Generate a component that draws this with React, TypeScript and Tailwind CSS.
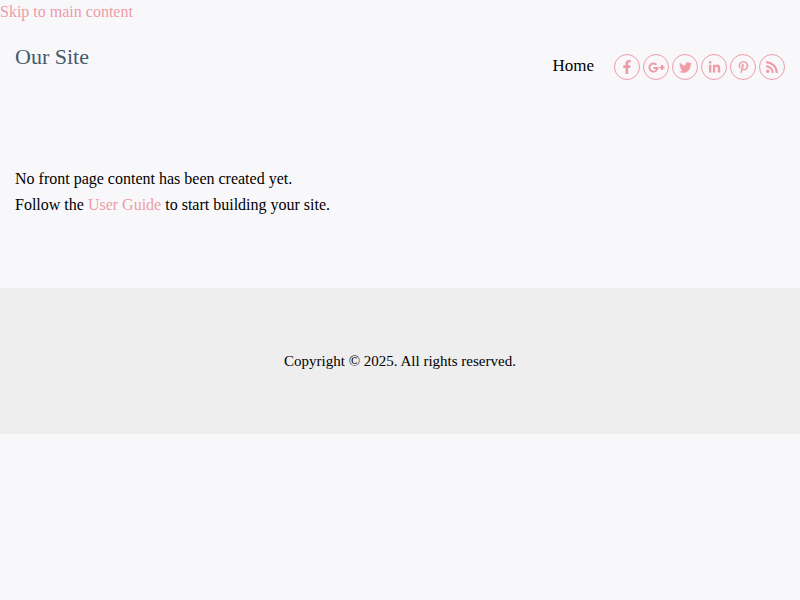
import React from "react";
import {
  FaFacebookF,
  FaTwitter,
  FaLinkedinIn,
  FaPinterestP,
} from "react-icons/fa";

type IconProps = { size: number; "aria-hidden"?: "true" };

function GooglePlusIcon({ size, ...rest }: IconProps) {
  return (
    <svg
      width={size}
      height={size}
      viewBox="0 0 17 17"
      fill="none"
      stroke="currentColor"
      strokeWidth="2"
      {...rest}
    >
      <path d="M8.4 5.6A4.1 4.1 0 1 0 9.6 9H5.4" />
      <path d="M11.6 8.5h5M14.1 6v5" />
    </svg>
  );
}

function RssIcon({ size, ...rest }: IconProps) {
  return (
    <svg
      width={size}
      height={size}
      viewBox="0 0 12 12"
      fill="none"
      stroke="currentColor"
      strokeWidth="2.1"
      {...rest}
    >
      <circle cx="1.8" cy="10.2" r="1.7" fill="currentColor" stroke="none" />
      <path d="M0 5.2A6.8 6.8 0 0 1 6.8 12M0 1.2A10.8 10.8 0 0 1 10.8 12" />
    </svg>
  );
}

const socials = [
  { label: "Facebook", Icon: FaFacebookF, size: 14 },
  { label: "Google Plus", Icon: GooglePlusIcon, size: 17 },
  { label: "Twitter", Icon: FaTwitter, size: 13 },
  { label: "LinkedIn", Icon: FaLinkedinIn, size: 13 },
  { label: "Pinterest", Icon: FaPinterestP, size: 13 },
  { label: "RSS", Icon: RssIcon, size: 12 },
];

export default function App() {
  return (
    <div className="min-h-screen bg-[#f8f8fb] font-['Liberation_Serif',serif] text-base leading-[26px] text-black">
      <a href="#main-content" className="block leading-6 text-[#ee9ca7]">
        Skip to main content
      </a>
      <header className="flex items-start justify-between px-[15px] pt-4">
        <h1 className="text-[22px] leading-[34px] text-[#455a6b]">
          <a href="#home">Our Site</a>
        </h1>
        <div className="flex items-end gap-5 pt-3">
          <nav aria-label="Main">
            <a href="#home" className="block text-[17px] leading-7">
              Home
            </a>
          </nav>
          <ul className="flex gap-[3px] pt-[2px]">
            {socials.map(({ label, Icon, size }) => (
              <li key={label}>
                <a
                  href="#social"
                  aria-label={label}
                  className="flex size-[26px] items-center justify-center rounded-full border border-[#ee9ca7] text-[#ee9ca7]"
                >
                  <Icon size={size} aria-hidden="true" />
                </a>
              </li>
            ))}
          </ul>
        </div>
      </header>
      <main id="main-content" className="px-[15px] pt-[86px] pb-[70px]">
        <p>No front page content has been created yet.</p>
        <p>
          Follow the{" "}
          <a href="#guide" className="text-[#ee9ca7]">
            User Guide
          </a>{" "}
          to start building your site.
        </p>
      </main>
      <footer className="bg-[#eeeeee] px-[15px] py-[60px] text-center text-[15px]">
        <p>Copyright © 2025. All rights reserved.</p>
      </footer>
    </div>
  );
}
